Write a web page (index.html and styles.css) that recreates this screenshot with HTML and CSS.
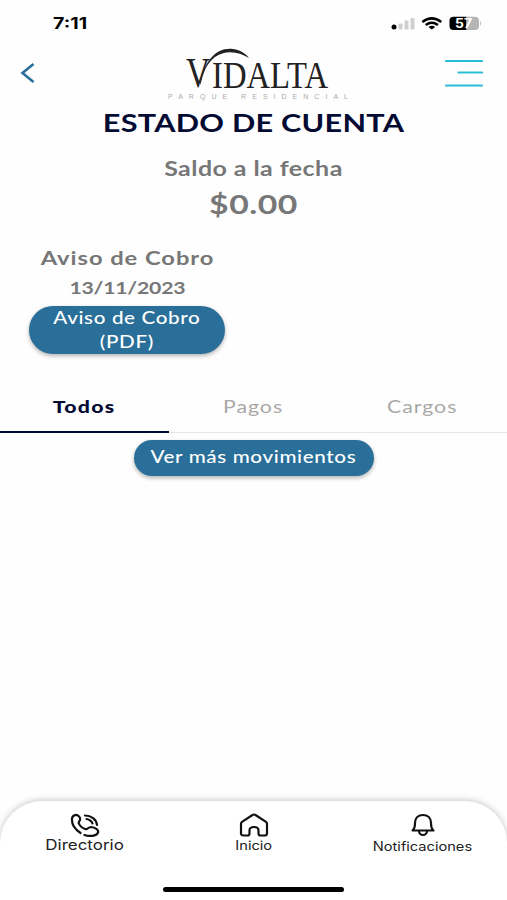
FILE: index.html
```html
<!DOCTYPE html>
<html lang="es">
<head>
    <meta charset="UTF-8">
    <meta name="viewport" content="width=device-width, initial-scale=1">
    <title>Estado de cuenta</title>
    <link rel="stylesheet" href="styles.css">
</head>
<body>
<div class="status-bar">
    <span class="time">7:11</span>
    <svg class="status-icons" width="92" height="16" viewBox="0 0 92 16">
        <circle cx="5" cy="11" r="2.5" fill="#000"/>
        <g fill="#cfcfcf">
            <rect x="9.5" y="7.5" width="4" height="6" rx="1"/>
            <rect x="15.5" y="4.5" width="4" height="9" rx="1"/>
            <rect x="21.5" y="2" width="4" height="11.5" rx="1"/>
        </g>
        <g fill="none" stroke="#000" stroke-width="2.5">
            <path d="M33.3 5.9 Q42.8 -1.2 52.3 5.9"/>
            <path d="M36.7 9 Q42.8 4.6 48.9 9"/>
        </g>
        <path d="M39.4 11 Q42.8 8.6 46.2 11 L42.8 13.6 Z" fill="#000"/>
        <path d="M64.5 .8 H77.5 V14 H64.5 Q60.5 14 60.5 10 V4.8 Q60.5 .8 64.5 .8Z" fill="#000"/>
        <path d="M77.5 .8 H86 Q90 .8 90 4.8 V10 Q90 14 86 14 H77.5Z" fill="#b5b5b5"/>
        <path d="M91 5 Q93 7.4 91 9.8Z" fill="#b5b5b5"/>
        <text class="battery" x="66" y="12" textLength="17" lengthAdjust="spacingAndGlyphs">57</text>
    </svg>
</div>

<header class="header">
    <svg class="back" width="16" height="22" viewBox="0 0 16 22">
        <path d="M13.5 2 L2.5 11 L13.5 20"/>
    </svg>
    <svg class="logo" width="184" height="56" viewBox="0 0 184 56">
        <path d="M38 34 C43 12 55 -1 71 1 C79 2 84 6 87 10 C77 3.500 63 1.500 53 9 C44 16 41 25 38.500 37Z" fill="#222"/>
        <text class="logo-name" x="24" y="39" font-size="42" textLength="24" lengthAdjust="spacingAndGlyphs">V</text>
        <text class="logo-name" x="50" y="39.5" font-size="38" textLength="116" lengthAdjust="spacingAndGlyphs">IDALTA</text>
        <text class="logo-sub" x="6" y="51" textLength="180" lengthAdjust="spacing">PARQUE RESIDENCIAL</text>
    </svg>
    <svg class="menu" width="38" height="28" viewBox="0 0 38 28">
        <path d="M1 2 H37 M13.5 13.5 H37 M1 26.5 H37"/>
    </svg>
</header>

<main>
    <h1 class="title"><span class="wide">ESTADO DE CUENTA</span></h1>
    <p class="balance-label"><span class="wide">Saldo a la fecha</span></p>
    <p class="balance"><span class="wide">$0.00</span></p>

    <section class="notice">
        <p class="notice-title"><span class="wide">Aviso de Cobro</span></p>
        <p class="notice-date"><span class="wide">13/11/2023</span></p>
        <button class="btn btn-pdf"><span class="wide">Aviso de Cobro<br>(PDF)</span></button>
    </section>

    <nav class="tabs">
        <a class="tab active"><span class="wide">Todos</span></a>
        <a class="tab"><span class="wide">Pagos</span></a>
        <a class="tab"><span class="wide">Cargos</span></a>
    </nav>
    <button class="btn btn-more"><span class="wide">Ver más movimientos</span></button>
</main>

<footer class="bottom-bar">
    <nav class="bottom-nav">
        <a class="item directory">
            <svg width="30" height="24" viewBox="0 0 30 24">
                <path d="M10.5 20 C5 16.5 1.5 11 2 5.5 C2.5 1.5 7.5 .8 9.5 4 C11.5 7.5 8.5 8 8.7 10 C9.5 12.5 12.5 15 15.5 16.2 C18 16.5 18 14 21 14 C25 14.5 29 16.5 28 19.5 C26.5 23.5 19 23.5 14.5 22"/>
                <path d="M15 2.5 C21 2.5 26.5 6.5 27 12"/>
                <path d="M16.5 6 C18.5 6 22 8 22.5 10.5"/>
            </svg>
            <span class="wide">Directorio</span>
        </a>
        <a class="item home">
            <svg width="30" height="24" viewBox="0 0 30 24">
                <path d="M4.5 22.5 Q2 22.5 2 20.5 V10.5 Q2 9.5 3 8.8 L13.5 2 Q15 1 16.5 2 L27 8.8 Q28 9.5 28 10.5 V20.5 Q28 22.5 25.5 22.5 H21.5 Q19.5 22.5 19.5 20.5 V17.5 Q19.5 14 15 14 Q10.5 14 10.5 17.5 V20.5 Q10.5 22.5 8.5 22.5Z"/>
            </svg>
            <span class="wide">Inicio</span>
        </a>
        <a class="item notifications">
            <svg width="30" height="24" viewBox="0 0 30 24">
                <path d="M4.5 17.5 C7 15.5 7 13.5 7 10 C7 5 10.5 2 15 2 C19.5 2 23 5 23 10 C23 13.5 23 15.5 25.5 17.5 Z"/>
                <path d="M11 18 C11 23.3 19 23.3 19 18"/>
            </svg>
            <span class="wide">Notificaciones</span>
        </a>
    </nav>
    <div class="home-indicator"></div>
</footer>
</body>
</html>
```
FILE: styles.css
```css
:root {
    --navy: #040b33;
    --blue: #2a6f99;
    --cyan: #2bbcd6;
    --gray: #777777;
    --light-gray: #a8a8a8;
}

* {
    box-sizing: border-box;
}

body {
    margin: 0;
    height: 900px;
    display: flex;
    flex-direction: column;
    overflow: hidden;
    background: #fefefe;
    font-family: Lato, sans-serif;
}

h1, p {
    margin: 0;
}

.wide {
    display: inline-block;
    white-space: nowrap;
    transform: scaleX(1.25);
}

.status-bar {
    height: 48px;
    padding: 16px 26px 0 53px;
    display: flex;
    justify-content: space-between;
}

.time {
    font: 700 15.5px/16px Inter, sans-serif;
    transform: scaleX(1.26);
    transform-origin: left;
}

.battery {
    font: 700 12.5px Inter, sans-serif;
    fill: #fff;
}

.header {
    height: 56px;
    padding: 0 24px 0 20px;
    display: grid;
    grid-template-columns: 1fr 184px 1fr;
    align-items: start;
}

.back {
    margin-top: 14px;
    fill: none;
    stroke: var(--blue);
    stroke-width: 2.6;
}

.logo {
    overflow: visible;
    transform: translateX(2px);
}

.menu {
    margin-top: 11px;
    justify-self: end;
    stroke: var(--cyan);
    stroke-width: 2.2;
    stroke-linecap: round;
}

.logo-name {
    font-family: "Liberation Serif", serif;
    fill: #222;
}

.logo-sub {
    font: 7px "Liberation Sans", sans-serif;
    fill: #aaa;
}

main {
    flex: 1;
    text-align: center;
}

.title {
    color: var(--navy);
    font-size: 24.5px;
    letter-spacing: .2px;
    line-height: 37px;
}

.balance-label {
    margin-top: 12px;
    color: var(--gray);
    font-size: 20px;
    font-weight: 700;
    letter-spacing: .35px;
    line-height: 30px;
}

.balance {
    color: var(--gray);
    font-size: 27px;
    font-weight: 700;
    letter-spacing: .4px;
    line-height: 41px;
}

.notice {
    width: 196px;
    margin: 19px 0 0 29px;
}

.notice-title,
.notice-date {
    color: var(--gray);
    font-size: 19px;
    font-weight: 700;
    letter-spacing: .75px;
    line-height: 30px;
}

.notice-date {
    font-size: 17px;
    letter-spacing: -.2px;
}

.btn {
    display: block;
    padding: 0;
    border: 0;
    border-radius: 24px;
    background: var(--blue);
    color: #fff;
    font: 500 16.5px/24px Lato, sans-serif;
    letter-spacing: .5px;
    box-shadow: 0 2px 4px rgba(0, 0, 0, .3);
}

.btn-pdf {
    width: 196px;
    height: 48px;
    margin-top: 3px;
    padding-bottom: 2px;
}

.btn-more {
    width: 240px;
    height: 36px;
    margin: 7px auto 0;
    padding-bottom: 2px;
}

.tabs {
    height: 51px;
    margin-top: 28px;
    display: grid;
    grid-template-columns: repeat(3, 1fr);
    border-bottom: 1px solid #e5e8ea;
}

.tab {
    height: 51px;
    color: var(--light-gray);
    font-size: 17px;
    letter-spacing: .8px;
    line-height: 50px;
}

.tab.active {
    color: var(--navy);
    font-weight: 900;
    letter-spacing: 1px;
    border-bottom: 2px solid var(--navy);
}

.bottom-bar {
    height: 99px;
    padding-top: 12px;
    border-radius: 42px 42px 0 0;
    background: #fff;
    box-shadow: 0 -1px 6px rgba(0, 0, 0, .22);
}

.bottom-nav {
    height: 74px;
    display: grid;
    grid-template-columns: repeat(3, 1fr);
}

.item {
    display: flex;
    flex-direction: column;
    align-items: center;
    font: 12.5px/18px Inter, sans-serif;
    color: #222;
}

.item .wide {
    transform: scaleX(1.17);
}

.item svg {
    fill: none;
    stroke: #111;
    stroke-width: 2.2;
    stroke-linecap: round;
    stroke-linejoin: round;
}

.directory {
    font-size: 14.5px;
    line-height: 16px;
}

.notifications {
    line-height: 20px;
}

.home-indicator {
    width: 181px;
    height: 5px;
    margin: 0 auto;
    border-radius: 3px;
    background: #000;
}
```
